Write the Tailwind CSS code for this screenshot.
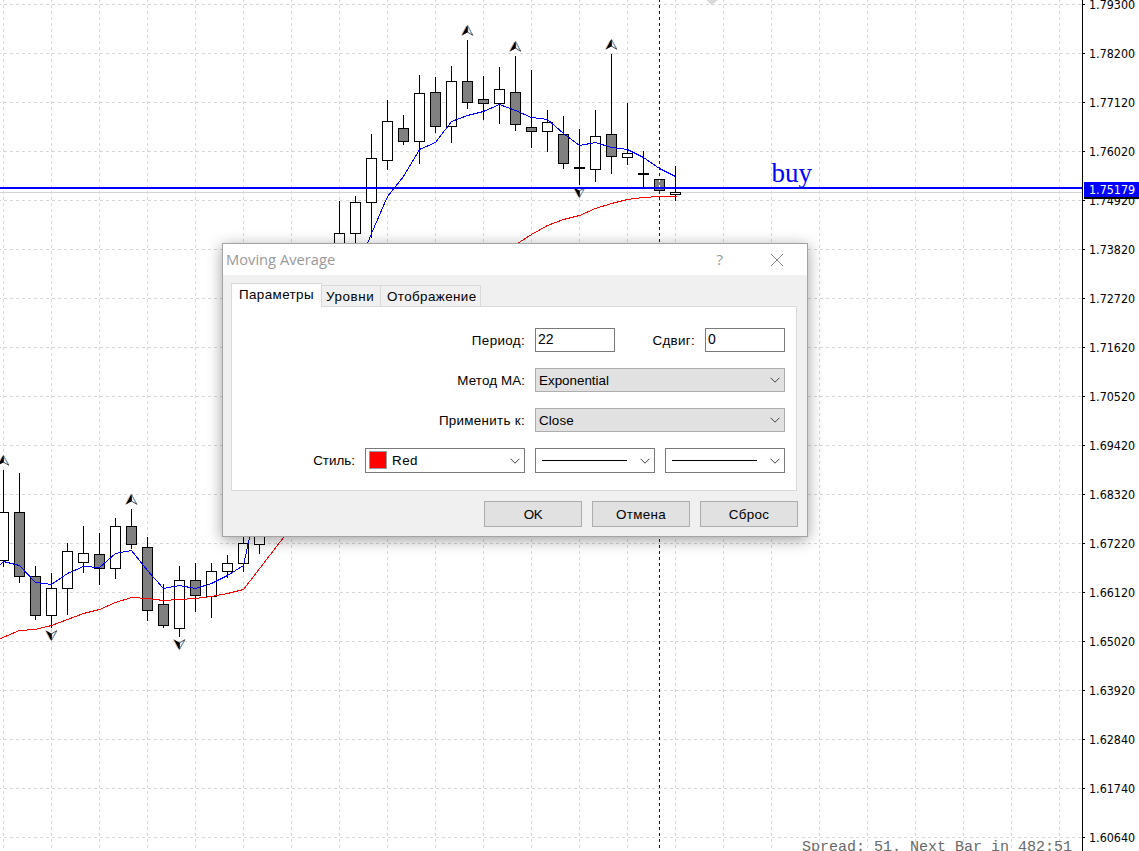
<!DOCTYPE html>
<html lang="ru">
<head>
<meta charset="utf-8">
<title>Moving Average</title>
<script src="https://cdn.jsdelivr.net/npm/@tailwindcss/browser@4"></script>
</head>
<body class="bg-white">
<div class="relative flex h-[851px] w-[1139px] overflow-hidden bg-white">
  <svg id="chart" class="block h-[851px] w-[1083px] shrink-0" viewBox="0 0 1083 851" shape-rendering="crispEdges">
    <g id="grid" stroke="#d9d9d9" stroke-dasharray="3 3"></g>
    <path d="M707 0h10v1h-1v1h-1v1h-2v1h-1v1h-1v-1h-1v-1h-1v-1h-1v-1h-1z" fill="#d9d9d9"/>
    <path d="M0 192.5H1082" stroke="#d3d3d3"/>
    <g id="candles" stroke="#000"></g>
    <path d="M659.5 -1V851" stroke="#0000c8" stroke-dasharray="3 3"/>
    <path d="M659.5 180V190" stroke="#fff" stroke-dasharray="3 3" stroke-dashoffset="1"/>
    <g fill="none">
      <polyline stroke="#f00" points="0,638 19,630 35,629 51,625 67,619 83,613 99,609 115,602 131,597 147,598 163,600 179,599 195,598 211,596 227,593 243,589 283,537 517,243 531,234 547,225 563,219 579,215 595,208 611,203 627,199 643,197 659,196 676,196" transform="translate(.5 .5)"/>
      <polyline stroke="#00f" points="-1,565 3,561 19,565 35,582 51,584 67,573 83,566 99,567 115,553 131,550 147,570 163,588 179,585 195,588 211,583 227,575 243,565 249,537 367,243 371,233 387,196 403,176 419,149 435,142 451,121 467,115 483,111 499,104 515,110 531,117 547,119 563,133 579,145 595,142 611,147 627,149 643,157 659,168 675,176" transform="translate(.5 .5)"/>
    </g>
    <g id="fractals" shape-rendering="geometricPrecision"></g>
    <path d="M0 188H1083" stroke="#00f" stroke-width="2"/>
    <path d="M1082.500 0V851" stroke="#000"/>
    <text x="771.500" y="181.500" fill="#00f" font-size="27" font-family="Liberation Serif, serif">buy</text>
    <text x="802" y="851" fill="#696969" font-size="15" font-family="Liberation Mono, monospace" xml:space="preserve">Spread: 51. Next Bar in 482:51</text>
  </svg>
  <div id="axis" class="-mt-5 w-14 shrink-0"></div>
  <div class="absolute top-[182px] left-[1084px] h-[17px] w-[55px] bg-black"><div class="h-[15px] bg-[#0000ff] pl-[5px] font-['DejaVu_Sans_Condensed','DejaVu_Sans',sans-serif] text-[12.4px] leading-[16px] text-white">1.75179</div></div>

  <div class="absolute top-[243px] left-[222px] flex h-[294px] w-[586px] flex-col border border-[#a3a3a3] bg-[#f0f0f0] font-['Liberation_Sans',Arial,sans-serif] text-[13.4px] text-black shadow-[0_3px_14px_rgba(0,0,0,0.38)]">
    <div class="flex h-[31px] shrink-0 items-center bg-white pl-[3px] text-[#999999]">
      <span class="font-['Open_Sans',sans-serif] text-[14.7px] leading-[29px] -mt-px">Moving Average</span>
      <span class="-mt-px ml-auto font-['Open_Sans',sans-serif] text-[15px]">?</span>
      <svg class="mr-[23px] ml-[47px] block h-[14px] w-[14px]" viewBox="0 0 14 14" fill="none" stroke="#8a8a8a"><path d="M1 1L13 13M13 1L1 13"/></svg>
    </div>
    <div class="flex h-8 shrink-0 items-end pl-2">
      <div class="z-10 flex h-6 w-[91px] items-center border border-b-0 border-[#d9d9d9] bg-white pb-px pl-[7px] tracking-[.4px]"><span>Параметры</span></div>
      <div class="flex h-[22px] w-[59px] items-center border-t border-r border-[#d9d9d9] pt-[2px] pl-[4px] tracking-[.6px]"><span>Уровни</span></div>
      <div class="flex h-[22px] w-[100px] items-center border-t border-r border-[#d9d9d9] pt-[2px] pl-[6px] tracking-[.4px]"><span>Отображение</span></div>
    </div>
    <div class="-mt-px ml-2 flex h-[185px] w-[566px] shrink-0 flex-col border border-[#d9d9d9] bg-white pt-[13px] pr-[11px]">
      <div class="flex h-10 items-center justify-end gap-[10px]">
        <span class="pt-[2px] tracking-[.35px]">Период:</span>
        <div class="h-6 w-20 border border-[#7a7a7a] pl-[2px] text-[14px] leading-[21px]">22</div>
        <span class="w-[70px] pt-[2px] text-right tracking-[.3px]">Сдвиг:</span>
        <div class="h-6 w-20 border border-[#7a7a7a] pl-[2px] text-[14px] leading-[21px]">0</div>
      </div>
      <div class="flex h-10 items-center justify-end gap-[10px]">
        <span class="pt-[2px] tracking-[.1px]">Метод MA:</span>
        <div class="flex h-6 w-[250px] items-center justify-between border border-[#adadad] bg-[#e1e1e1] pr-[4px] pl-[3px]"><span class="pt-[2px]">Exponential</span><svg class="block h-[6px] w-[10px]" viewBox="0 0 10 6" fill="none" stroke="#444"><path d="M.5 .7L5 5.200L9.500 .7"/></svg></div>
      </div>
      <div class="flex h-10 items-center justify-end gap-[10px]">
        <span class="pt-[2px] tracking-[.3px]">Применить к:</span>
        <div class="flex h-6 w-[250px] items-center justify-between border border-[#adadad] bg-[#e1e1e1] pr-[4px] pl-[3px]"><span class="pt-[2px] tracking-[.1px]">Close</span><svg class="block h-[6px] w-[10px]" viewBox="0 0 10 6" fill="none" stroke="#444"><path d="M.5 .7L5 5.200L9.500 .7"/></svg></div>
      </div>
      <div class="flex h-[41px] items-center justify-end gap-[10px]">
        <span class="pt-px">Стиль:</span>
        <div class="flex h-[25px] w-40 items-center border border-[#7a7a7a] pr-[4px] pl-[3px]"><div class="-mt-px h-[18px] w-[18px] border border-[#999] bg-[#ff0000]"></div><span class="ml-[5px] pt-px tracking-[.5px]">Red</span><svg class="ml-auto block h-[6px] w-[10px]" viewBox="0 0 10 6" fill="none" stroke="#444"><path d="M.5 .7L5 5.200L9.500 .7"/></svg></div>
        <div class="flex h-[25px] w-[120px] items-center justify-between border border-[#7a7a7a] pr-[4px] pl-[6px]"><div class="h-px w-[85px] bg-black"></div><svg class="block h-[6px] w-[10px]" viewBox="0 0 10 6" fill="none" stroke="#444"><path d="M.5 .7L5 5.200L9.500 .7"/></svg></div>
        <div class="flex h-[25px] w-[120px] items-center justify-between border border-[#7a7a7a] pr-[4px] pl-[6px]"><div class="h-px w-[85px] bg-black"></div><svg class="block h-[6px] w-[10px]" viewBox="0 0 10 6" fill="none" stroke="#444"><path d="M.5 .7L5 5.200L9.500 .7"/></svg></div>
      </div>
    </div>
    <div class="mt-[10px] flex justify-end gap-[10px] pr-[9px] tracking-[.3px]">
      <div class="flex h-[26px] w-[98px] items-center justify-center border border-[#adadad] bg-[#e1e1e1] pt-[3px] tracking-[-.5px]">OK</div>
      <div class="flex h-[26px] w-[98px] items-center justify-center border border-[#adadad] bg-[#e1e1e1] pt-[3px]">Отмена</div>
      <div class="flex h-[26px] w-[98px] items-center justify-center border border-[#adadad] bg-[#e1e1e1] pt-[3px]">Сброс</div>
    </div>
  </div>
</div>
<script>
let s = '';
for (let x = 3; x < 1082; x += 48) s += `<path d="M${x}.5 -1V851"/>`;
for (let y = 4; y < 851; y += 49) s += `<path d="M-2 ${y}.5H1082"/>`;
document.getElementById('grid').innerHTML = s;

// x, high, body top, body bottom, low, falling
const bars = [[3,470,512,560,566,0],[19,473,512,576,582,1],[35,566,576,615,619,1],[51,573,588,615,627,0],[67,543,551,588,614,0],[83,526,553,562,572,0],[99,533,554,568,584,1],[115,518,526,568,578,0],[131,509,526,544,548,1],[147,537,547,610,620,1],[163,584,604,625,627,1],[179,566,580,628,636,0],[195,563,580,595,611,1],[211,563,571,596,617,0],[227,555,563,571,577,0],[243,530,543,563,571,0],[259,530,532,544,553,0],[339,201,233,260,270,0],[355,196,202,233,260,0],[371,134,158,202,237,0],[387,100,121,160,169,0],[403,115,128,141,144,1],[419,75,93,141,163,0],[435,77,92,126,132,1],[451,66,81,126,142,0],[467,40,81,102,108,1],[483,76,99,103,119,1],[499,67,89,103,123,0],[515,56,92,124,130,1],[531,70,127,131,147,1],[547,110,122,131,151,0],[563,116,134,163,168,1],[579,129,167,168,184,0],[595,110,136,169,181,0],[611,54,134,156,173,1],[627,103,153,157,164,0],[643,151,173,174,187,0],[659,179,179,190,190,1],[675,166,192,194,200,0]];
document.getElementById('candles').innerHTML = bars.map(([x,h,a,b,l,f]) =>
  `<path d="M${x}.5 ${h}V${l+1}"/><rect x="${x-4.5}" y="${a}.5" width="10" height="${b-a}" fill="${f?'#808080':'#fff'}"/>`).join('');

// arrowhead split down the middle: solid half and outlined half
const arrow = (x,y,d) => `<g transform="translate(${x+.3} ${y}) scale(1 ${d})"><path d="M.3 .8L5.500 10.300L.3 7.200Z" fill="#fff" stroke="#4a4f58" stroke-width="1"/><path d="M.9 2L4.200 8.500" stroke="#7fb4e0" stroke-width=".8"/><path d="M0 0L-5.800 10.800L.5 7.200Z" fill="#000"/><path d="M-1.300 1.500L-5.600 9.800" stroke="#c98a4a" stroke-width=".6"/></g>`;
document.getElementById('fractals').innerHTML =
  [[467,25],[515,41],[611,39],[3,455],[131,494]].map(p => arrow(p[0],p[1],1)).join('') +
  [[579,198],[51,641],[179,650]].map(p => arrow(p[0],p[1],-1)).join('');

document.getElementById('axis').innerHTML = ['1.79300','1.78200','1.77120','1.76020','1.74920','1.73820','1.72720','1.71620','1.70520','1.69420','1.68320','1.67220','1.66120','1.65020','1.63920','1.62840','1.61740','1.60640'].map(t =>
  `<div class="flex h-[49px] items-center font-['DejaVu_Sans_Condensed','DejaVu_Sans',sans-serif] text-[12.4px] leading-none"><i class="h-px w-[2px] bg-black"></i><span class="ml-1 pt-[2px]">${t}</span></div>`).join('');
</script>
</body>
</html>
